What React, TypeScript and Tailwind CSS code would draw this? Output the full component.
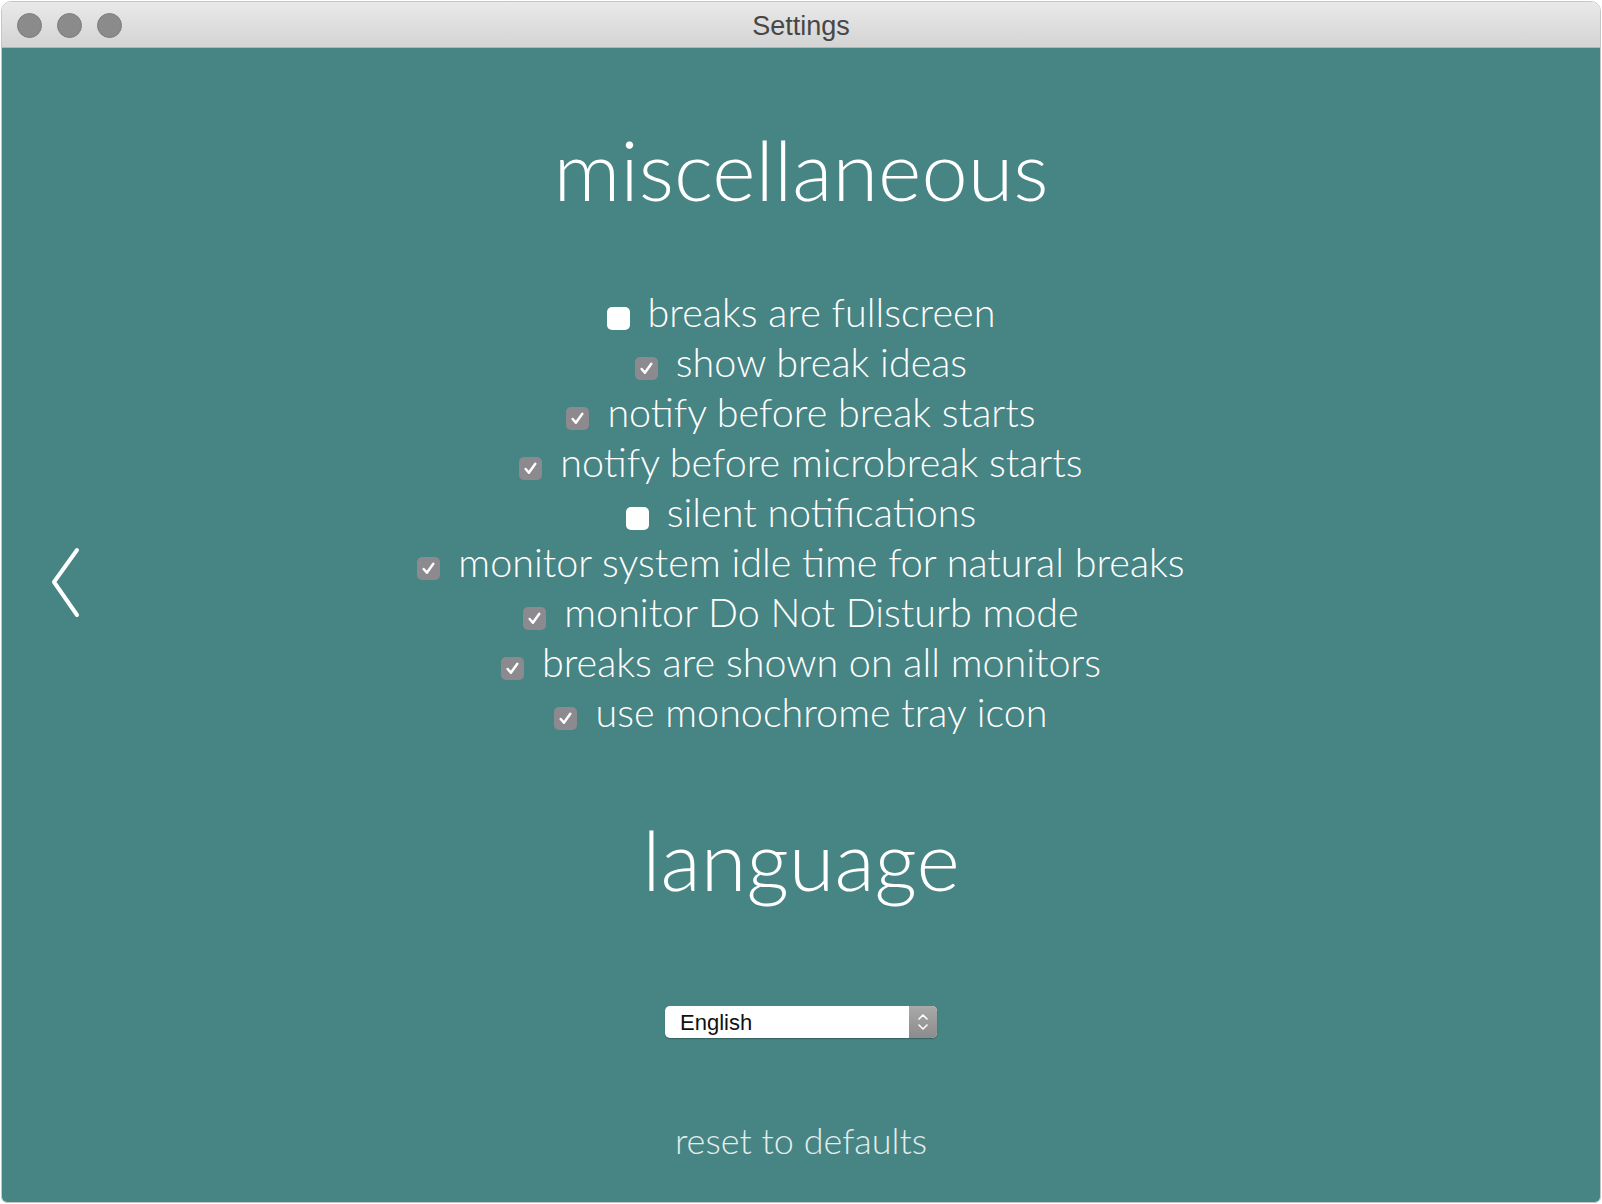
import { useState } from "react";

type Option = { label: string; checked: boolean };

const initialOptions: Option[] = [
  { label: "breaks are fullscreen", checked: false },
  { label: "show break ideas", checked: true },
  { label: "notify before break starts", checked: true },
  { label: "notify before microbreak starts", checked: true },
  { label: "silent notifications", checked: false },
  { label: "monitor system idle time for natural breaks", checked: true },
  { label: "monitor Do Not Disturb mode", checked: true },
  { label: "breaks are shown on all monitors", checked: true },
  { label: "use monochrome tray icon", checked: true },
];

const CheckBox = ({ checked, onClick }: { checked: boolean; onClick: () => void }) => (
  <button
    onClick={onClick}
    className={
      checked
        ? "mt-3 flex h-[23px] w-[23px] shrink-0 items-center justify-center rounded-[5px] bg-[#8d8a8f]"
        : "mt-3 h-[23px] w-[23px] shrink-0 rounded-[5px] bg-white"
    }
  >
    {checked && (
      <svg width="15" height="15" viewBox="0 0 14 14">
        <polyline points="2.5,7.5 5.5,11 11.5,2.5" fill="none" stroke="white" strokeWidth="2.3" strokeLinecap="round" strokeLinejoin="round" />
      </svg>
    )}
  </button>
);

export default function App() {
  const [options, setOptions] = useState(initialOptions);

  const toggle = (i: number) =>
    setOptions(options.map((o, idx) => (idx === i ? { ...o, checked: !o.checked } : o)));

  return (
    <div className="h-[1204px] w-full bg-white p-[1px]">
      <div className="flex h-full flex-col overflow-hidden rounded-t-[10px] rounded-b-[6px] border border-[#c6c6c6]">
        {/* title bar */}
        <div className="relative flex h-[46px] shrink-0 items-center justify-center border-b border-[#b4b4b4] bg-gradient-to-b from-[#e9e9e9] to-[#d4d4d4] pt-[3px]">
          <div className="absolute left-[15px] top-[11px] flex gap-[15px]">
            <div className="h-[25px] w-[25px] rounded-full border border-[#7d7d7d] bg-[#8b8b8b]" />
            <div className="h-[25px] w-[25px] rounded-full border border-[#7d7d7d] bg-[#8b8b8b]" />
            <div className="h-[25px] w-[25px] rounded-full border border-[#7d7d7d] bg-[#8b8b8b]" />
          </div>
          <span className="text-[27px] text-[#474747] [font-family:'Liberation_Sans',Arial,sans-serif]">Settings</span>
        </div>

        {/* content */}
        <div className="relative flex flex-1 flex-col items-center bg-[#478484] text-white [font-family:Lato,'Noto_Sans',sans-serif] font-light">
          <button className="absolute left-[48px] top-[499px]">
            <svg width="32" height="72" viewBox="0 0 32 72">
              <polyline points="27,3 4,35 27,68" fill="none" stroke="white" strokeWidth="4" strokeLinecap="round" strokeLinejoin="round" />
            </svg>
          </button>

          <h1 className="mt-[80px] text-[83px] leading-none">miscellaneous</h1>

          <div className="mt-[76px] flex flex-col items-center">
            {options.map((o, i) => (
              <label key={o.label} className="flex h-[50px] items-center gap-[18px]">
                <CheckBox checked={o.checked} onClick={() => toggle(i)} />
                <span className="text-[39.5px] leading-[50px]">{o.label}</span>
              </label>
            ))}
          </div>

          <h1 className="mt-[81px] text-[83px] leading-none">language</h1>

          <div className="mt-[105px] flex h-[32px] w-[272px] overflow-hidden rounded-[5px] bg-white shadow-[0_1px_1px_rgba(0,0,0,0.25)]">
            <span className="flex flex-1 items-center pl-[15px] text-[22px] text-[#111] [font-family:'Liberation_Sans',Arial,sans-serif] font-normal">English</span>
            <div className="flex w-[28px] items-center justify-center bg-gradient-to-b from-[#a9a9a9] to-[#8c8c8c]">
              <svg width="12" height="20" viewBox="0 0 12 20">
                <polyline points="2,7 6,3 10,7" fill="none" stroke="white" strokeWidth="1.6" strokeLinecap="round" strokeLinejoin="round" />
                <polyline points="2,13 6,17 10,13" fill="none" stroke="white" strokeWidth="1.6" strokeLinecap="round" strokeLinejoin="round" />
              </svg>
            </div>
          </div>

          <button className="mt-[84px] text-[36px] leading-none text-[#e3eded]">reset to defaults</button>
        </div>
      </div>
    </div>
  );
}
